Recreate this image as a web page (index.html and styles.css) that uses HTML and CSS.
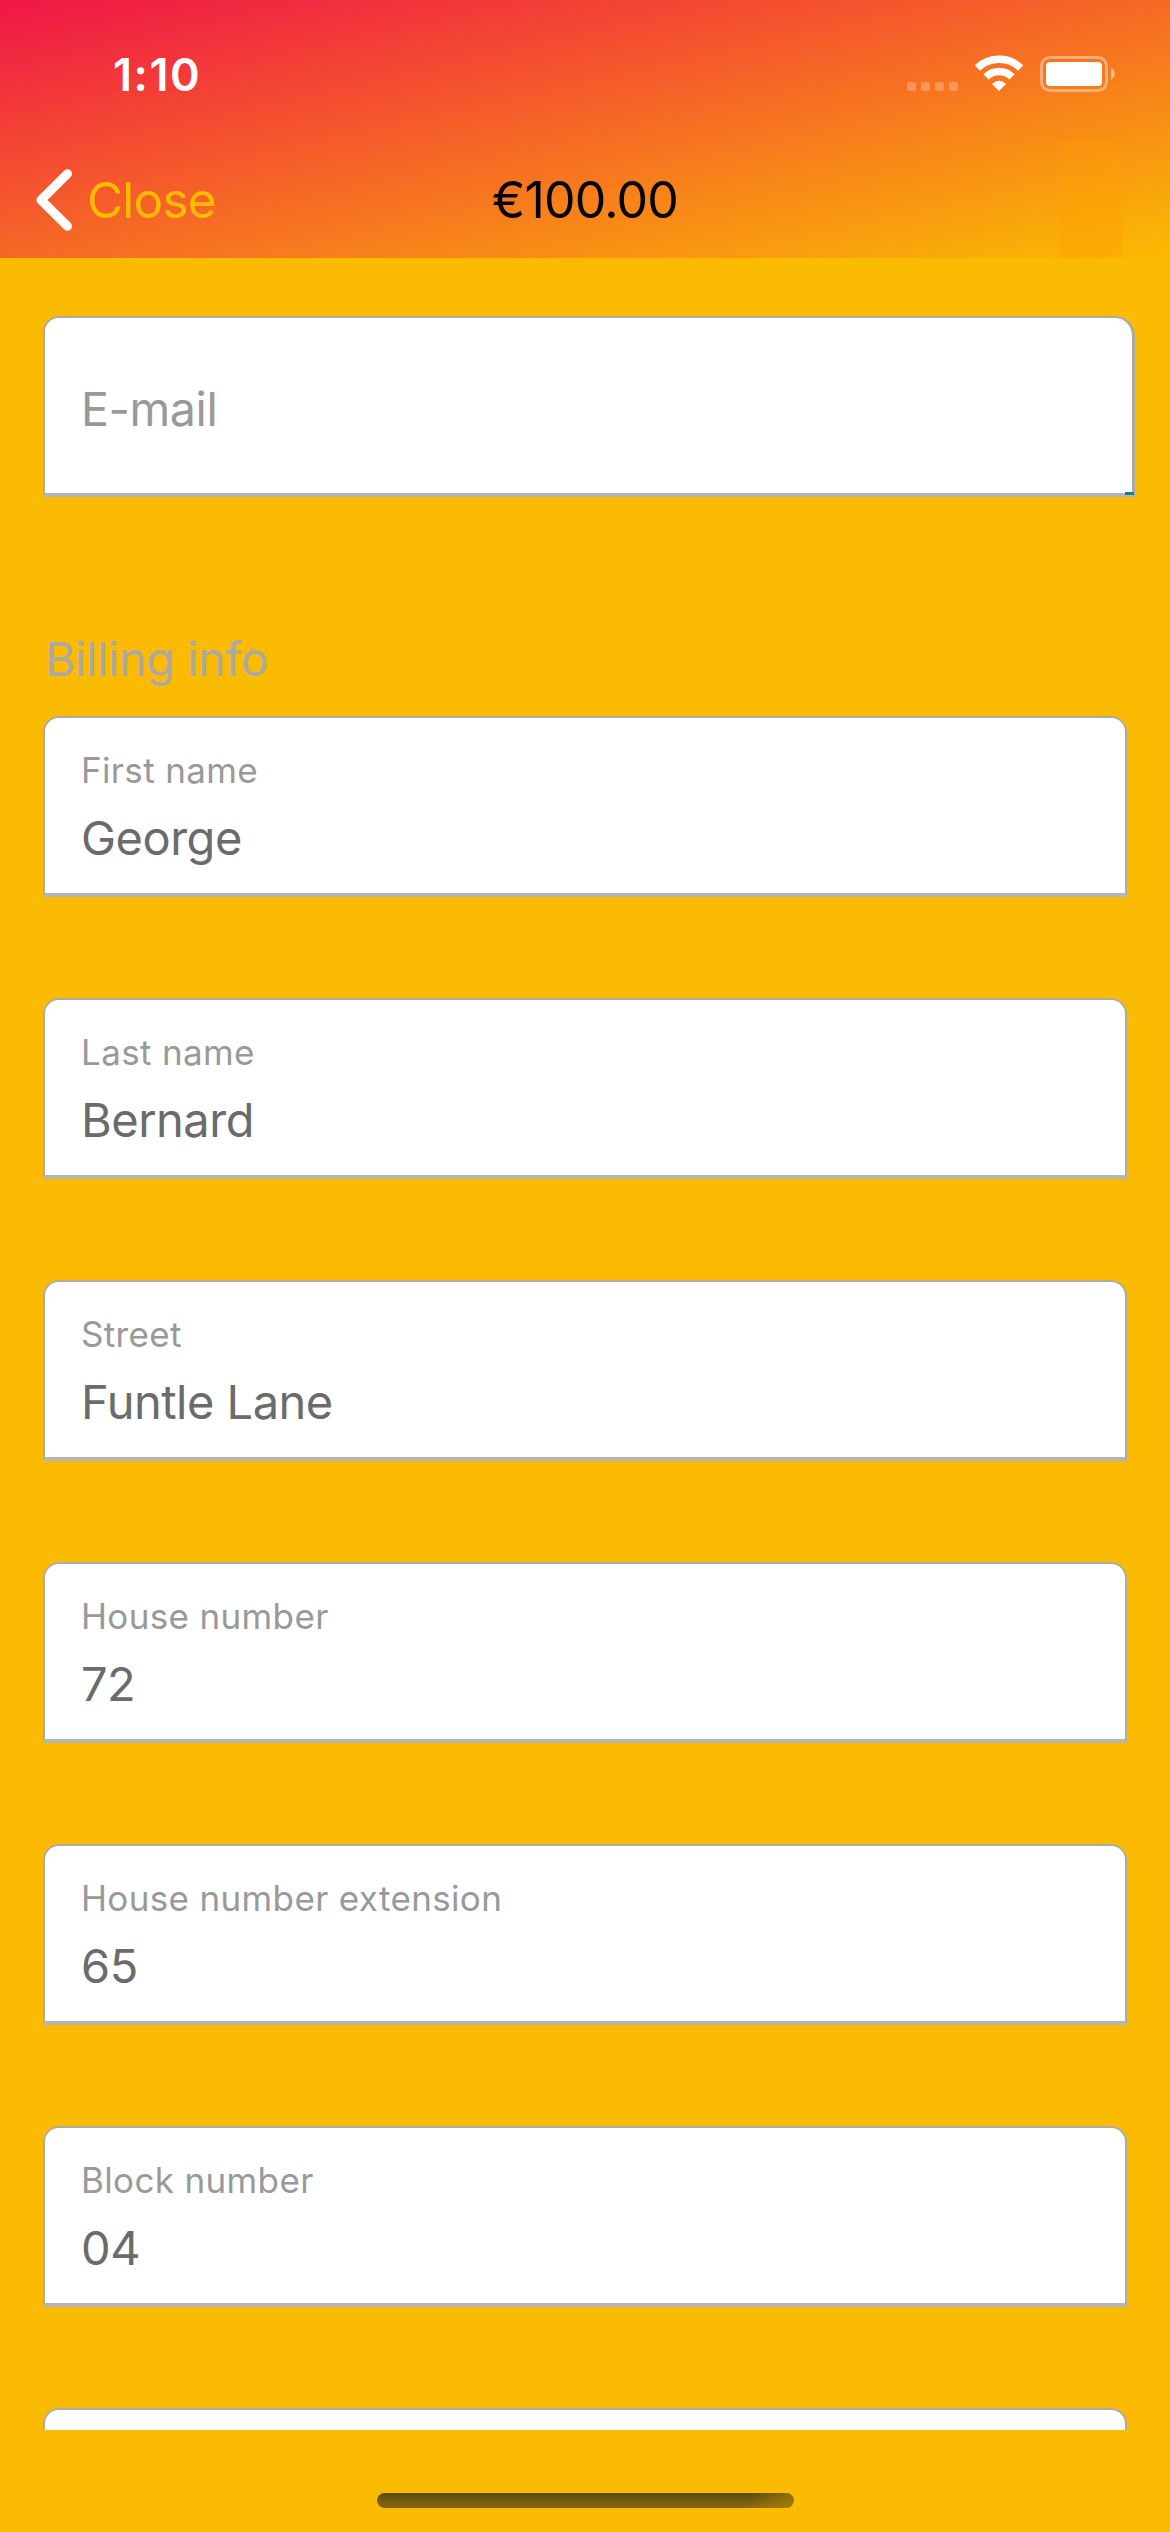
FILE: index.html
```html
<!DOCTYPE html>
<html lang="en">
<head>
<meta charset="utf-8">
<title>Billing info</title>
<link rel="stylesheet" href="styles.css">
</head>
<body>
<div class="screen">
  <header class="header">
    <div class="status">
      <span class="time">1:10</span>
      <svg class="status-icons" viewBox="0 0 210 40" width="210" height="40">
        <g fill="#fff" fill-opacity=".25">
          <rect x="2" y="28" width="9" height="9" rx="2.5"/>
          <rect x="16" y="28" width="9" height="9" rx="2.5"/>
          <rect x="30" y="28" width="9" height="9" rx="2.5"/>
          <rect x="44" y="28" width="9" height="9" rx="2.5"/>
        </g>
        <g fill="none" stroke="#fff" stroke-width="7.5">
          <path d="M72.300 14A31.600 31.600 0 0 1 115.700 14"/>
          <path d="M81 22.800A18.500 18.500 0 0 1 107 22.800"/>
        </g>
        <path d="M87 30Q94 23.400 101 30L94 37Z" fill="#fff"/>
        <rect x="136.500" y="3.500" width="65" height="33" rx="8.500" fill="none" stroke="#fff" stroke-opacity=".4" stroke-width="3"/>
        <rect x="141" y="8" width="56" height="24" rx="4" fill="#fff"/>
        <path d="M206 14C211 16 211 23 206 25.500Z" fill="#fff" fill-opacity=".5"/>
      </svg>
    </div>
    <nav class="nav">
      <div class="back">
        <svg viewBox="0 0 36 62" width="36" height="62"><path d="M31.500 4.700L5 31L31.500 57.300" fill="none" stroke="#fff" stroke-width="9" stroke-linecap="round" stroke-linejoin="round"/></svg>
        <span class="close">Close</span>
      </div>
      <h1 class="title">€100.00</h1>
    </nav>
    <div class="action"></div>
  </header>
  <main class="form">
    <div class="field email"><span class="placeholder">E-mail</span><i class="cursor"></i></div>
    <h2 class="section">Billing info</h2>
    <div class="list">
      <div class="field"><span class="label">First name</span><span class="value">George</span></div>
      <div class="field"><span class="label">Last name</span><span class="value">Bernard</span></div>
      <div class="field"><span class="label">Street</span><span class="value">Funtle Lane</span></div>
      <div class="field"><span class="label">House number</span><span class="value">72</span></div>
      <div class="field"><span class="label">House number extension</span><span class="value">65</span></div>
      <div class="field"><span class="label">Block number</span><span class="value">04</span></div>
      <div class="field"></div>
    </div>
  </main>
  <footer class="footer"><div class="home"></div></footer>
</div>
</body>
</html>
```

FILE: styles.css
```css
* { box-sizing: border-box; }
body {
  margin: 0;
  background: #fbbb03;
  font-family: Inter, "Liberation Sans", sans-serif;
}
.screen {
  width: 1170px;
  height: 2532px;
  display: flex;
  flex-direction: column;
  overflow: hidden;
}
.header {
  position: relative;
  height: 258px;
  flex: none;
  background: linear-gradient(to bottom right, #f01648, #fbbb02);
}
.status {
  height: 141px;
  display: flex;
  justify-content: space-between;
  align-items: flex-start;
  padding: 54px 55px 0 113px;
}
.time {
  font-size: 45px;
  font-weight: 600;
  line-height: 42px;
  letter-spacing: 1.5px;
  color: #fff;
}
.nav {
  height: 117px;
  display: grid;
  grid-template-columns: 1fr auto 1fr;
  align-items: start;
  padding: 28px 36px 0;
}
.back { display: flex; gap: 15px; }
.close {
  font-size: 49.5px;
  font-weight: 400;
  line-height: 62px;
  letter-spacing: -0.8px;
  color: #fbbb03;
}
.title {
  margin: 0;
  font-size: 50px;
  font-weight: 400;
  line-height: 62px;
  letter-spacing: -0.8px;
  color: #000;
}
.action {
  position: absolute;
  left: 1059px;
  top: 140px;
  width: 63px;
  height: 118px;
  background: linear-gradient(rgba(255, 153, 8, .3), rgba(254, 162, 2, .5));
}
.form {
  height: 2172px;
  flex: none;
  overflow: hidden;
  padding: 58px 43px 0;
}
.field {
  height: 181px;
  display: flex;
  flex-direction: column;
  background: #fff;
  border: 2px solid #aeaba3;
  border-bottom: 4px solid #b5b5b5;
  border-radius: 16px 16px 0 0;
  padding: 31px 36px 0;
}
.email {
  position: relative;
  width: 1092px;
  border-right: 3px solid #acaaa8;
  border-top-right-radius: 20px;
}
.placeholder {
  margin-top: 30px;
  font-size: 46.5px;
  line-height: 60px;
  letter-spacing: -0.4px;
  color: #999;
}
.cursor {
  position: absolute;
  right: -2px;
  bottom: -2px;
  width: 9px;
  height: 3px;
  background: #128087;
}
.section {
  margin: 132px 0 27px 2px;
  font-size: 46.5px;
  font-weight: 400;
  line-height: 60px;
  letter-spacing: -0.3px;
  color: #aaa9a6;
}
.list {
  display: grid;
  gap: 101px;
}
.label {
  font-size: 35px;
  line-height: 42px;
  letter-spacing: 0.35px;
  color: #999;
}
.value {
  margin-top: 17px;
  font-size: 47px;
  line-height: 60px;
  letter-spacing: -0.5px;
  color: #6b6b6b;
}
.footer {
  height: 102px;
  display: flex;
  justify-content: center;
  padding-top: 63px;
}
.home {
  width: 417px;
  height: 15px;
  border-radius: 8px;
  background:
    linear-gradient(120deg, rgba(190, 142, 6, 0) 88%, rgba(190, 142, 6, .6)),
    linear-gradient(#5c4a10, #8a670c);
}
```
